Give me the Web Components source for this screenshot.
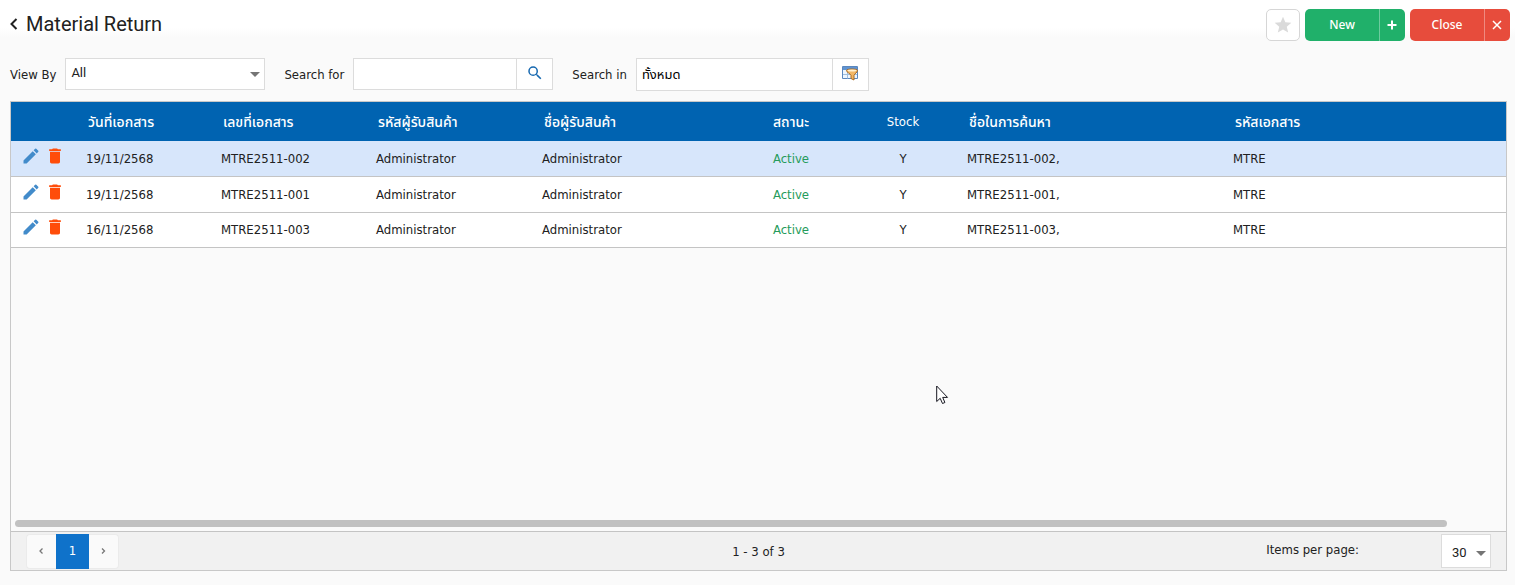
<!DOCTYPE html>
<html lang="th">
<head>
<meta charset="utf-8">
<title>Material Return</title>
<style>
  html, body { height: 100%; }
  body {
    margin: 0;
    background: #fafafa;
    color: #212121;
    font: 13px/20px "DejaVu Sans Condensed", "Noto Sans Thai", "Noto Sans", sans-serif;
  }
</style>
</head>
<body>
<material-return-page></material-return-page>
<script>
const base = `<style>
  *, *::before, *::after { box-sizing: border-box; }
  :host { box-sizing: border-box; }
  button, input, select { font: inherit; color: inherit; margin: 0; }
  button { cursor: pointer; }
  svg { display: block; }
</style>`;

class View extends HTMLElement {
  constructor() {
    super();
    this.attachShadow({ mode: 'open' }).innerHTML = base + this.view();
  }
}

customElements.define('split-button', class extends View {
  view() {
    return `<style>
      :host { display: block; }
      button {
        display: flex; align-items: stretch; width: 100px; height: 32px; padding: 0;
        border: 0; border-radius: 5px; background: var(--tone); color: #fff;
        font: 500 12px/32px "Noto Sans", sans-serif; overflow: hidden;
      }
      .label { flex: 1; text-align: center; }
      .mark {
        width: 26px; padding-right: 1px; display: grid; place-items: center;
        border-left: 1px solid rgba(255, 255, 255, .35);
      }
    </style>
    <button type="button"><span class="label"><slot></slot></span><span class="mark"><slot name="icon"></slot></span></button>`;
  }
});

customElements.define('page-header', class extends View {
  view() {
    return `<style>
      :host {
        display: flex; align-items: flex-start; justify-content: space-between;
        height: 50px; padding: 9px 5px 0 8px;
        background: linear-gradient(#fff 28px, #fafafa 38px);
      }
      .title { display: flex; align-items: center; gap: 8px; height: 30px; }
      .title a { color: #212121; }
      h1 { margin: 0; font: 400 20px/30px Roboto, sans-serif; }
      .actions { display: flex; gap: 5px; }
      .star {
        width: 34px; height: 32px; padding: 0; display: grid; place-items: center;
        border: 1px solid #d6d6d6; border-radius: 5px; background: #fff;
      }
    </style>
    <div class="title">
      <a href="#" aria-label="Back"><svg width="10" height="12" viewBox="0 0 10 12" fill="none" stroke="currentColor" stroke-width="2"><path d="M8.500 1 3.500 6l5 5"/></svg></a>
      <h1>Material Return</h1>
    </div>
    <div class="actions">
      <button class="star" type="button" aria-label="Favourite"><svg width="20" height="20" viewBox="0 0 24 24" fill="#dadada"><path d="M12 17.300 18.200 21l-1.700-7L22 9.200l-7.200-.6L12 2 9.200 8.600 2 9.200l5.500 4.800L5.800 21z"/></svg></button>
      <split-button style="--tone:#20b06a">New
        <svg slot="icon" width="10" height="10" viewBox="0 0 10 10" stroke="#fff" stroke-width="2"><path d="M5 .5v9M.5 5h9"/></svg>
      </split-button>
      <split-button style="--tone:#e74c3c">Close
        <svg slot="icon" width="10" height="10" viewBox="0 0 10 10" stroke="#fff" stroke-width="1.500"><path d="m1 1 8 8M9 1 1 9"/></svg>
      </split-button>
    </div>`;
  }
});

customElements.define('filter-bar', class extends View {
  view() {
    return `<style>
      :host { display: flex; align-items: flex-start; gap: 19px; height: 51px; padding: 8px 10px 0; }
      .field { display: flex; align-items: flex-start; }
      .field label { line-height: 34px; margin-right: 9px; white-space: nowrap; }
      .box { display: flex; height: 32px; border: 1px solid #dcdcdc; background: #fff; }
      .pick { display: grid; width: 200px; }
      .pick > * { grid-area: 1 / 1; }
      select {
        appearance: none; border: 0; background: none; padding: 0 24px 2px 5px;
        font: 13px/28px Roboto, sans-serif; outline: 0;
      }
      .pick svg { justify-self: end; align-self: center; margin-right: 4px; pointer-events: none; }
      input { border: 0; background: none; padding: 0 5px; outline: 0; min-width: 0; flex: 1; color: #000; }
      .box button {
        width: 36px; padding: 0 0 3px; border: 0; border-left: 1px solid #dcdcdc;
        background: none; display: grid; place-items: center;
      }
      .for { width: 200px; }
      .in { width: 233px; height: 33px; }
    </style>
    <div class="field">
      <label for="view">View By</label>
      <div class="box pick">
        <select id="view"><option>All</option></select>
        <svg width="10" height="5" viewBox="0 0 10 5" fill="#757575"><path d="M0 0h10L5 5z"/></svg>
      </div>
    </div>
    <div class="field">
      <label for="term">Search for</label>
      <div class="box for">
        <input id="term" type="text">
        <button type="button" aria-label="Search"><svg width="18" height="18" viewBox="0 0 24 24" fill="#1668b0"><path d="M15.500 14h-.79l-.28-.27A6.470 6.470 0 0 0 16 9.500 6.500 6.500 0 1 0 9.500 16c1.610 0 3.090-.59 4.230-1.570l.27.28v.79l5 4.990L20.490 19zm-6 0a4.500 4.500 0 1 1 0-9 4.500 4.500 0 0 1 0 9z"/></svg></button>
      </div>
    </div>
    <div class="field">
      <label for="scope">Search in</label>
      <div class="box in">
        <input id="scope" type="text" value="ทั้งหมด">
        <button type="button" aria-label="Choose columns"><svg width="17" height="16" viewBox="0 0 17 16">
          <path fill="#edf5fd" stroke="#5b87bd" d="M.5 1.500h15v12H.5z"/>
          <path fill="#5f93d1" d="M1 2h14v3H1z"/>
          <path stroke="#9fbede" d="M1 9.500h14M5.500 5v8.500M10.500 5v8.500"/>
          <path fill="#f3b765" stroke="#a86a22" d="M4.500 5.500c0-2 11-2 11 0 0 2-3 3-3.500 5v4.500l-3-1.500v-3c-.5-2-4.500-3-4.500-5z"/>
          <ellipse cx="10" cy="5.500" rx="4.500" ry="1" fill="#fff0cf"/>
        </svg></button>
      </div>
    </div>`;
  }
});

const columns = [
  ['วันที่เอกสาร', ''], ['เลขที่เอกสาร', ''], ['รหัสผู้รับสินค้า', ''], ['ชื่อผู้รับสินค้า', ''],
  ['สถานะ', 'mid'], ['Stock', 'mid'], ['ชื่อในการค้นหา', ''], ['รหัสเอกสาร', '']
];
const records = [['19/11/2568', '002'], ['19/11/2568', '001'], ['16/11/2568', '003']]
  .map(([date, n]) => [date, `MTRE2511-${n}`, 'Administrator', 'Administrator', 'Active', 'Y', `MTRE2511-${n},`, 'MTRE']);

customElements.define('record-table', class extends View {
  view() {
    const tools = `<td class="tools"><div>
      <button type="button" aria-label="Edit"><svg width="20" height="20" viewBox="0 0 24 24" fill="#428bca"><path d="M3 17.250V21h3.750L17.810 9.940l-3.750-3.750zM20.710 7.040a1 1 0 0 0 0-1.410l-2.340-2.340a1 1 0 0 0-1.410 0l-1.830 1.830 3.750 3.750z"/></svg></button>
      <button type="button" aria-label="Delete"><svg width="20" height="20" viewBox="0 0 24 24" fill="#ff4d0a"><path d="M6 19c0 1.100.9 2 2 2h8c1.100 0 2-.9 2-2V7H6zM19 4h-3.500l-1-1h-5l-1 1H5v2h14z"/></svg></button>
    </div></td>`;
    return `<style>
      :host { display: block; }
      table { width: 100%; table-layout: fixed; border-collapse: separate; border-spacing: 0; }
      th { height: 39px; padding: 0 8px; background: #0063b1; color: #fff; font-weight: 500; text-align: left; white-space: nowrap; }
      th.thai { font-size: 14px; }
      td { height: 36px; padding: 0 6px; background: #fff; border-bottom: 1px solid #c4c4c4; white-space: nowrap; }
      tr:last-child td { height: 35px; }
      tr.on td { background: #d7e6fb; }
      th.mid, td.mid { text-align: center; }
      td.state { color: #259b5a; }
      .tools div { display: flex; gap: 4px; padding: 0 0 6px 4px; }
      .tools button { padding: 0; border: 0; background: none; }
    </style>
    <table>
      <colgroup><col style="width:69px"><col style="width:135px"><col style="width:155px"><col style="width:166px"><col style="width:201px"><col style="width:108px"><col style="width:116px"><col style="width:266px"><col></colgroup>
      <thead><tr><th></th>${columns.map(([t, c]) => `<th class="${c}${t === 'Stock' ? '' : ' thai'}">${t}</th>`).join('')}</tr></thead>
      <tbody>${records.map((r, i) => `<tr class="${i ? '' : 'on'}">${tools}${r.map((v, k) =>
        `<td class="${columns[k][1]}${k === 4 ? ' state' : ''}">${v}</td>`).join('')}</tr>`).join('')}</tbody>
    </table>`;
  }
});

customElements.define('page-footer', class extends View {
  view() {
    return `<style>
      :host {
        display: grid; grid-template-columns: 1fr auto 1fr; align-items: center;
        height: 39px; padding: 0 15px; border-top: 1px solid #c4c4c4; background: #f1f1f1;
      }
      nav { display: flex; justify-self: start; align-items: center; }
      nav button {
        width: 30px; height: 35px; padding: 0; display: grid; place-items: center;
        border: 1px solid #ebebeb; background: #fafafa; color: #777;
      }
      nav button:first-child { border-radius: 4px 0 0 4px; border-right: 0; }
      nav button:last-child { border-radius: 0 4px 4px 0; border-left: 0; }
      nav button.now { width: 33px; border: 0; background: #0f72ca; color: #fff; }
      .count { padding-top: 2px; }
      .size { display: flex; justify-self: end; align-items: center; gap: 82px; }
      .size label { padding-bottom: 2px; }
      .pick { display: grid; width: 50px; height: 34px; border: 1px solid #dcdcdc; background: #fff; }
      .pick > * { grid-area: 1 / 1; }
      select { appearance: none; border: 0; background: none; padding: 3px 0 0 10px; font: 13px/28px Roboto, sans-serif; outline: 0; }
      .pick svg { justify-self: end; align-self: center; margin: 4px 4px 0 0; pointer-events: none; }
    </style>
    <nav aria-label="Pages">
      <button type="button" aria-label="Previous page"><svg width="5" height="6" viewBox="0 0 5 6" fill="none" stroke="currentColor" stroke-width="1.300"><path d="M3.500.5 1 3l2.500 2.500"/></svg></button>
      <button class="now" type="button">1</button>
      <button type="button" aria-label="Next page"><svg width="5" height="6" viewBox="0 0 5 6" fill="none" stroke="currentColor" stroke-width="1.300"><path d="M1 .5 3.500 3 1 5.500"/></svg></button>
    </nav>
    <span class="count">1 - 3 of 3</span>
    <div class="size">
      <label for="size">Items per page:</label>
      <div class="pick">
        <select id="size"><option>30</option></select>
        <svg width="10" height="5" viewBox="0 0 10 5" fill="#757575"><path d="M0 0h10L5 5z"/></svg>
      </div>
    </div>`;
  }
});

customElements.define('grid-panel', class extends View {
  view() {
    return `<style>
      :host { display: flex; flex-direction: column; border: 1px solid #c8c8c8; }
      .space { flex: 1; }
      .bar { padding: 0 59px 4px 4px; }
      .thumb { height: 7px; border-radius: 4px; background: #c1c1c1; }
    </style>
    <record-table></record-table>
    <div class="space"></div>
    <div class="bar"><div class="thumb"></div></div>
    <page-footer></page-footer>`;
  }
});

customElements.define('mouse-pointer', class extends View {
  view() {
    return `<style>:host { position: fixed; left: 936px; top: 385px; pointer-events: none; }</style>
    <svg width="13" height="20" viewBox="0 0 13 20" fill="#fff" stroke="#15151f"><path d="M.7 1v15.500l3.500-3.200 2.300 5.200 2.400-1-2.200-5.100h4.800z"/></svg>`;
  }
});

customElements.define('material-return-page', class extends View {
  view() {
    return `<style>
      :host { display: flex; flex-direction: column; min-height: 100vh; }
      grid-panel { flex: 1; margin: 0 8px 14px 10px; }
    </style>
    <page-header></page-header>
    <filter-bar></filter-bar>
    <grid-panel></grid-panel>
    <mouse-pointer></mouse-pointer>`;
  }
});
</script>
</body>
</html>
